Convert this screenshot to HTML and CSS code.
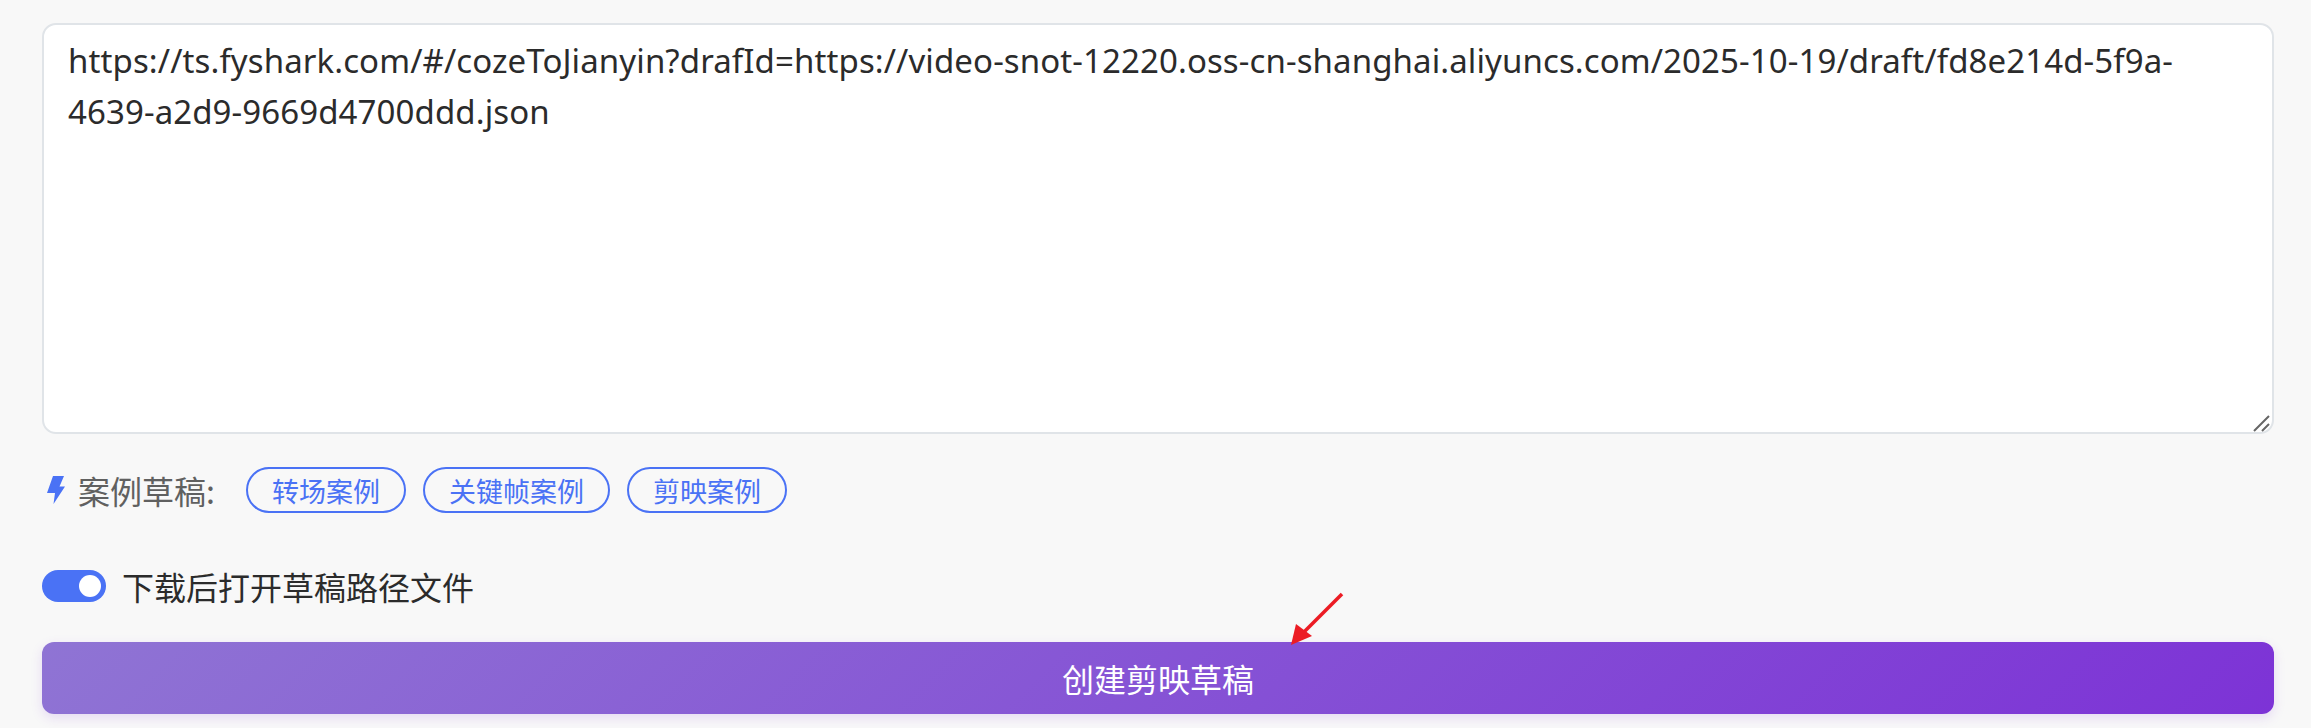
FILE: index.html

```html
<!DOCTYPE html>
<html>
<head>
    <title>创建剪映草稿</title>
    <meta charset="UTF-8">
    <link rel="stylesheet" href="styles.css">
</head>
<body>
    <div class="container">
        <div class="input-wrap">
            <textarea class="draft-input" spellcheck="false">https://ts.fyshark.com/#/cozeToJianyin?drafId=https://video-snot-12220.oss-cn-shanghai.aliyuncs.com/2025-10-19/draft/fd8e214d-5f9a-4639-a2d9-9669d4700ddd.json</textarea>
            <svg class="grip" viewBox="0 0 18 18"><path d="M1 17L16 2M9 17L16 10" stroke="#666" stroke-width="2" fill="none"/></svg>
        </div>

        <div class="examples">
            <svg class="bolt" viewBox="0 0 18 28"><path d="M6 0H17L12.5 10.5H18L6.5 28L8 17H0Z"/></svg>
            <span class="examples-label">案例草稿:</span>
            <button class="chip">转场案例</button>
            <button class="chip">关键帧案例</button>
            <button class="chip">剪映案例</button>
        </div>

        <div class="toggle-row">
            <span class="toggle"><span class="knob"></span></span>
            <span class="toggle-label">下载后打开草稿路径文件</span>
        </div>

        <div class="submit-wrap">
            <button class="submit">创建剪映草稿</button>
            <svg class="arrow" viewBox="0 0 60 60"><path d="M55 4L16 43" stroke="#ec1c24" stroke-width="3.5" fill="none"/><path d="M4 55L9 34L25 46Z" fill="#ec1c24"/></svg>
        </div>
    </div>
</body>
</html>
```

FILE: styles.css

```css
html, body {
    height: 100%;
}
body {
    font-family: "Noto Sans CJK SC", "Noto Sans", sans-serif;
    background-color: #f8f8f8;
    margin: 0;
    overflow: hidden;
}
.container {
    padding: 23px 37px 0 42px;
}
.input-wrap {
    position: relative;
}
.draft-input {
    display: block;
    width: 100%;
    height: 411px;
    padding: 10px 25px 10px 24px;
    border: 2px solid #e0e4e8;
    border-radius: 14px;
    background-color: white;
    color: #2b2b2b;
    font-family: "Noto Sans", sans-serif;
    font-size: 33px;
    letter-spacing: 0.1px;
    line-height: 51px;
    box-sizing: border-box;
    outline: none;
    resize: none;
}
.grip {
    position: absolute;
    right: 3px;
    bottom: 2px;
    width: 18px;
    height: 18px;
}
.examples {
    display: flex;
    align-items: center;
    height: 46px;
    margin-top: 33px;
}
.bolt {
    width: 18px;
    height: 28px;
    margin-left: 5px;
    fill: #4a72f5;
}
.examples-label {
    margin-left: 13px;
    margin-right: 31px;
    color: #606060;
    font-size: 32px;
}
.chip {
    height: 46px;
    margin-right: 17px;
    padding: 0 24px;
    border: 2px solid #4a72f5;
    border-radius: 23px;
    background: none;
    color: #4a72f5;
    font-family: inherit;
    font-size: 27px;
    line-height: 1;
}
.toggle-row {
    display: flex;
    align-items: center;
    margin-top: 57px;
    height: 32px;
}
.toggle {
    display: flex;
    justify-content: flex-end;
    align-items: center;
    width: 64px;
    height: 32px;
    padding-right: 5px;
    border-radius: 16px;
    background-color: #4a72f5;
    box-sizing: border-box;
}
.knob {
    width: 22px;
    height: 22px;
    border-radius: 50%;
    background-color: white;
}
.toggle-label {
    margin-left: 16px;
    color: #2b2b2b;
    font-size: 32px;
}
.submit-wrap {
    position: relative;
    margin-top: 40px;
}
.submit {
    display: block;
    width: 100%;
    height: 72px;
    border: none;
    border-radius: 12px;
    background: linear-gradient(135deg, #8f74d4, #7d33d6);
    box-shadow: 0 4px 12px rgba(125, 51, 214, 0.15);
    color: white;
    font-family: inherit;
    font-size: 32px;
}
.arrow {
    position: absolute;
    left: 1245px;
    top: -52px;
    width: 60px;
    height: 60px;
}
```
